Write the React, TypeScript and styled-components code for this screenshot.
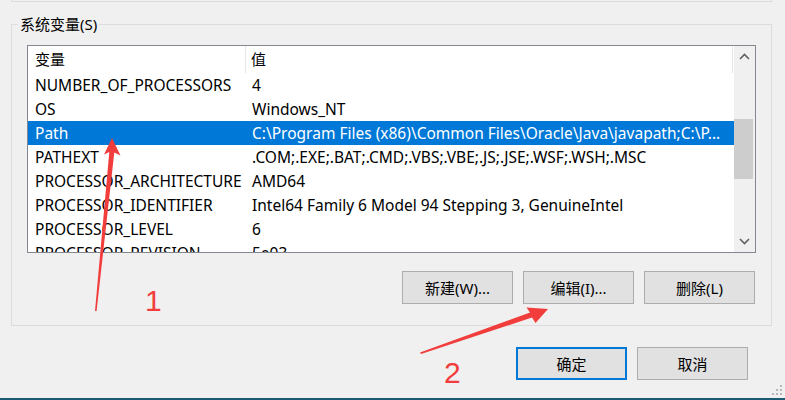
import React from 'react';
import styled, { createGlobalStyle } from 'styled-components';

const Global = createGlobalStyle`
  html, body { margin: 0; padding: 0; }
  body {
    background: #f0f0f0;
    font-family: "Noto Sans", "Noto Sans CJK SC", sans-serif;
    font-size: 15px;
    color: #000;
  }
`;

const Page = styled.div`
  position: relative;
  width: 785px;
  height: 400px;
  overflow: hidden;
  background: #f0f0f0;
  display: flex;
  flex-direction: column;
`;

const PrevGroup = styled.div`
  margin-left: 11px;
  width: 761px;
  height: 2px;
  box-sizing: border-box;
  border: 1px solid #dcdcdc;
  border-top: none;
`;

const Group = styled.fieldset`
  margin: 12px 0 0 11px;
  width: 761px;
  box-sizing: border-box;
  border: 1px solid #dcdcdc;
  padding: 11px 15px 21px 6px;
  min-width: 0;
`;

const Legend = styled.legend`
  padding: 0 2px;
  line-height: 20px;
  font-size: 15px;
  color: #000;
`;

const Inner = styled.div`
  margin-left: 9px;
  display: flex;
  flex-direction: column;
`;

const ListView = styled.div`
  height: 208px;
  box-sizing: border-box;
  border: 1px solid #828790;
  background: #fff;
  display: flex;
  font-size: 15.5px;
`;

const ListBody = styled.div`
  flex: 1;
  min-width: 0;
  overflow: hidden;
  display: flex;
  flex-direction: column;
`;

const HeaderRow = styled.div`
  display: grid;
  grid-template-columns: 218px 487px;
  height: 27px;
  flex: none;
`;

const HeaderCell = styled.div<{ $pad: number }>`
  border-right: 1px solid #e5e5e5;
  padding-left: ${p => p.$pad}px;
  line-height: 27px;
  font-size: 15px;
  white-space: nowrap;
  overflow: hidden;
`;

const Row = styled.div<{ $selected?: boolean }>`
  display: grid;
  grid-template-columns: 218px 1fr;
  height: 24px;
  flex: none;
  background: ${p => (p.$selected ? '#0078d7' : 'transparent')};
  color: ${p => (p.$selected ? '#fff' : '#000')};
`;

const Cell = styled.div<{ $pad: number }>`
  padding-left: ${p => p.$pad}px;
  padding-right: 4px;
  line-height: 24px;
  white-space: nowrap;
  overflow: hidden;
`;

const Scrollbar = styled.div`
  width: 21px;
  flex: none;
  background: #f0f0f0;
  display: flex;
  flex-direction: column;
`;

const ScrollArrow = styled.div`
  height: 21px;
  flex: none;
  display: flex;
  align-items: center;
  justify-content: center;
  padding-right: 1px;
`;

const Track = styled.div`
  flex: 1;
  display: flex;
  flex-direction: column;
`;

const Thumb = styled.div<{ $top: number }>`
  margin-top: ${p => p.$top}px;
  height: 60px;
  width: 19px;
  background: #cdcdcd;
`;

const ButtonRow = styled.div`
  margin-top: 18px;
  display: flex;
  justify-content: flex-end;
  gap: 10px;
  padding-right: 1px;
`;

const Button = styled.button<{ $default?: boolean }>`
  width: 111px;
  height: 33px;
  box-sizing: border-box;
  margin: 0;
  padding: 0;
  background: #e1e1e1;
  border: ${p => (p.$default ? '2px solid #0078d7' : '1px solid #adadad')};
  font-family: "Noto Sans", "Noto Sans CJK SC", sans-serif;
  font-size: 15px;
  color: #000;
`;

const Footer = styled.div`
  margin-top: 21px;
  display: flex;
  justify-content: flex-end;
  gap: 10px;
  padding-right: 37px;
`;

const BottomEdge = styled.div`
  margin-top: auto;
  height: 2px;
  background: #1d5a73;
  flex: none;
`;

const Grip = styled.svg`
  position: absolute;
  right: 2px;
  bottom: 4px;
`;

const Annotations = styled.svg`
  position: absolute;
  left: 0;
  top: 0;
  pointer-events: none;
`;

const Marker = styled.span<{ $x: number; $y: number }>`
  position: absolute;
  left: ${p => p.$x}px;
  top: ${p => p.$y}px;
  font-family: "Liberation Sans", Arial, sans-serif;
  font-size: 30px;
  line-height: 30px;
  color: #f23d3d;
`;

const rows: [string, string][] = [
  ['NUMBER_OF_PROCESSORS', '4'],
  ['OS', 'Windows_NT'],
  ['Path', 'C:\\Program Files (x86)\\Common Files\\Oracle\\Java\\javapath;C:\\P...'],
  ['PATHEXT', '.COM;.EXE;.BAT;.CMD;.VBS;.VBE;.JS;.JSE;.WSF;.WSH;.MSC'],
  ['PROCESSOR_ARCHITECTURE', 'AMD64'],
  ['PROCESSOR_IDENTIFIER', 'Intel64 Family 6 Model 94 Stepping 3, GenuineIntel'],
  ['PROCESSOR_LEVEL', '6'],
  ['PROCESSOR_REVISION', '5e03'],
];

const Chevron = ({ up }: { up?: boolean }) => (
  <svg width="11" height="7" viewBox="0 0 11 7">
    <polyline
      points={up ? '1,6 5.5,1.5 10,6' : '1,1 5.5,5.5 10,1'}
      fill="none"
      stroke="#606060"
      strokeWidth="1.6"
    />
  </svg>
);

export default function App() {
  return (
    <>
      <Global />
      <Page>
        <PrevGroup />
        <Group>
          <Legend>系统变量(S)</Legend>
          <Inner>
            <ListView>
              <ListBody>
                <HeaderRow>
                  <HeaderCell $pad={7}>变量</HeaderCell>
                  <HeaderCell $pad={5}>值</HeaderCell>
                </HeaderRow>
                {rows.map(([k, v]) => (
                  <Row key={k} $selected={k === 'Path'}>
                    <Cell $pad={7}>{k}</Cell>
                    <Cell $pad={6}>{v}</Cell>
                  </Row>
                ))}
              </ListBody>
              <Scrollbar>
                <ScrollArrow>
                  <Chevron up />
                </ScrollArrow>
                <Track>
                  <Thumb $top={52} />
                </Track>
                <ScrollArrow>
                  <Chevron />
                </ScrollArrow>
              </Scrollbar>
            </ListView>
            <ButtonRow>
              <Button>新建(W)...</Button>
              <Button>编辑(I)...</Button>
              <Button>删除(L)</Button>
            </ButtonRow>
          </Inner>
        </Group>
        <Footer>
          <Button $default>确定</Button>
          <Button>取消</Button>
        </Footer>
        <BottomEdge />
        <Grip width="12" height="12" viewBox="0 0 12 12">
          <g fill="#b8b8b8">
            <rect x="9" y="1" width="2" height="2" />
            <rect x="5" y="5" width="2" height="2" />
            <rect x="9" y="5" width="2" height="2" />
            <rect x="1" y="9" width="2" height="2" />
            <rect x="5" y="9" width="2" height="2" />
            <rect x="9" y="9" width="2" height="2" />
          </g>
        </Grip>
        <Annotations width="785" height="400" viewBox="0 0 785 400">
          <path
            d="M95,311 L109.3,152 L104,154.5 L112,138 L120.5,155.5 L114.3,152.5 L96.6,311 Z"
            fill="#f23d3d"
          />
          <path
            d="M420,352.5 L530,312.5 L526.5,307.5 L548,309 L535.5,323 L532,317.5 L421,354 Z"
            fill="#f23d3d"
          />
        </Annotations>
        <Marker $x={145} $y={286}>1</Marker>
        <Marker $x={444} $y={358}>2</Marker>
      </Page>
    </>
  );
}
